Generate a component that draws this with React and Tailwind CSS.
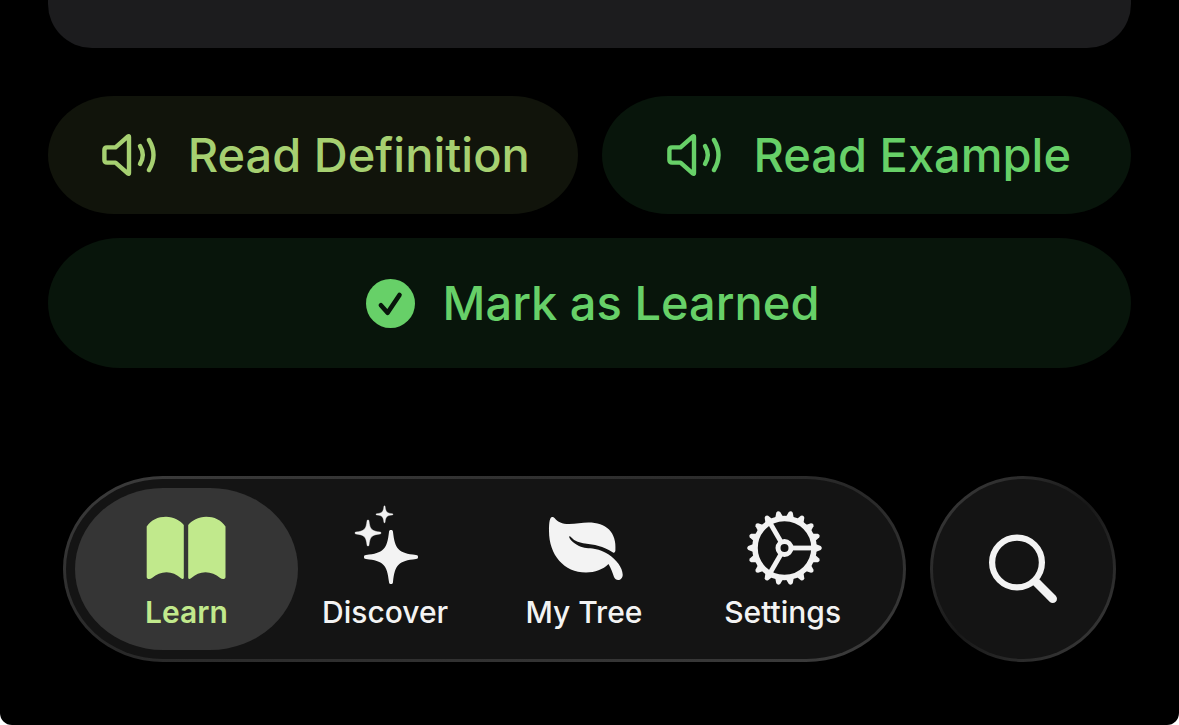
import React, { useState } from "react";

const STAR =
  "M0-27C1.5-27 1.8-26.5 2-25C4-7.5 7.5-4 25-2C26.5-1.8 27-1.5 27 0C27 1.5 26.5 1.8 25 2C7.5 4 4 7.5 2 25C1.8 26.5 1.5 27 0 27C-1.5 27-1.8 26.5-2 25C-4 7.5-7.5 4-25 2C-26.5 1.8-27 1.5-27 0C-27-1.5-26.5-1.8-25-2C-7.5-4-4-7.5-2-25C-1.8-26.5-1.5-27 0-27Z";

const SpeakerIcon = () => (
  <svg
    viewBox="0 0 56 48"
    className="w-14 h-12 shrink-0"
    fill="none"
    stroke="currentColor"
    strokeWidth="4.4"
    strokeLinecap="round"
    strokeLinejoin="round"
    aria-hidden="true"
  >
    <path d="M5 16.4H13.5L26 5.4Q27 4.6 27 6V42Q27 43.4 26 42.6L13.5 31.6H5Q2.4 31.6 2.4 29V19Q2.4 16.4 5 16.4Z" />
    <path d="M38 15Q43.6 24 38 33" />
    <path d="M47 9Q56 24 47 39" />
  </svg>
);

const CheckIcon = () => (
  <svg viewBox="0 0 49 49" className="w-[49px] h-[49px] shrink-0" aria-hidden="true">
    <circle cx="24.5" cy="24.5" r="24.5" fill="currentColor" />
    <path
      d="M14.9 26.3L21.6 33.8L33.5 15.9"
      fill="none"
      stroke="#08150b"
      strokeWidth="4.6"
      strokeLinecap="round"
      strokeLinejoin="round"
    />
  </svg>
);

const BookIcon = () => (
  <svg viewBox="0 0 80 80" className="size-20" fill="currentColor" aria-hidden="true">
    <path d="M.7 18.6C5 12 12 8.8 20 8.8S34 12.6 37.8 17V69.5C37.8 71.2 36.2 71.4 35 70.3C30.5 66.5 26 64.3 20.5 64.3S10.5 66.5 6 70C4 71.7 .7 71.4 .7 69Z" />
    <path d="M79.5 18.6C75.2 12 68.2 8.8 60.2 8.8S46 12.6 42.2 17V69.5C42.2 71.2 43.8 71.4 45 70.3C49.5 66.5 54 64.3 59.5 64.3S69.7 66.5 74.2 70C76.2 71.7 79.5 71.4 79.5 69Z" />
  </svg>
);

const SparklesIcon = () => (
  <svg viewBox="0 0 80 80" className="size-20 overflow-visible" fill="currentColor" aria-hidden="true">
    <path d={STAR} transform="translate(46 49)" />
    <path d={STAR} transform="translate(23 25) scale(.48)" stroke="currentColor" strokeWidth="1" />
    <path d={STAR} transform="translate(39.5 6.3) scale(.315)" stroke="currentColor" strokeWidth="1" />
  </svg>
);

const LeafIcon = () => (
  <svg viewBox="0 0 80 80" className="size-20" fill="currentColor" aria-hidden="true">
    <path d="M8 9C5 9 5 19 5 23C5 47 20 64.5 42 64.5C51 64.5 59 61.5 64.5 56C67 60 68.5 65 70 69C72 74 79 72.5 78.7 66.5C78.4 60 73 52 64.3 46.3C60 43.5 56 42 51 41C44 39.7 40 40.5 35 38C29 35 25 31 25.2 28.6C25.4 27.5 26.8 28.5 28 30C31 33.5 36 34.8 41 35.5C50 36.5 59 38 69 44.5C70.3 45.3 71.3 44 71.4 42.5C73 24 62 14.4 44.3 14.4C38 14.4 32 16 25 16C18 16 14 14 10.5 10Q9.5 8.8 8 9Z" />
  </svg>
);

const GearIcon = () => (
  <svg viewBox="0 0 80 80" className="size-20" aria-hidden="true">
    <g transform="translate(41.5 40)" fill="none" stroke="currentColor">
      <circle r="29.5" strokeWidth="5.6" />
      <circle r="6.5" strokeWidth="5" />
      {[0, 120, 240].map((angle) => (
        <path key={angle} d="M8 0H28" strokeWidth="4.8" transform={`rotate(${angle})`} />
      ))}
      {Array.from({ length: 18 }, (_, i) => (
        <path
          key={i}
          d="M31-4L36.2-2Q38.4 0 36.2 2L31 4Z"
          fill="currentColor"
          stroke="none"
          transform={`rotate(${i * 20})`}
        />
      ))}
    </g>
  </svg>
);

const SearchIcon = () => (
  <svg
    viewBox="0 0 80 80"
    className="size-20"
    fill="none"
    stroke="currentColor"
    strokeLinecap="round"
    aria-hidden="true"
  >
    <circle cx="34" cy="33.5" r="24.9" strokeWidth="6.2" />
    <path d="M53.5 53.5L69.7 69.7" strokeWidth="8.6" />
  </svg>
);

const tabs = [
  { name: "Learn", Icon: BookIcon },
  { name: "Discover", Icon: SparklesIcon },
  { name: "My Tree", Icon: LeafIcon },
  { name: "Settings", Icon: GearIcon },
];

const App = () => {
  const [activeTab, setActiveTab] = useState("Learn");

  return (
    <div className="bg-white">
      <div className="bg-black rounded-b-xl pb-[63px] font-['Inter',sans-serif] font-medium">
        <main className="px-12">
          <div className="h-12 bg-[#1c1c1e] rounded-b-[44px]" />
          <div className="grid grid-cols-2 gap-6 mt-12 text-[47px] leading-[58px]">
            <button
              type="button"
              className="flex items-center justify-center gap-[30px] pl-1.5 py-[30px] rounded-[66px/59px] bg-[#11140b] text-[#a6d071] whitespace-nowrap"
            >
              <SpeakerIcon />
              Read Definition
            </button>
            <button
              type="button"
              className="flex items-center justify-center gap-[30px] pl-1.5 py-[30px] rounded-[66px/59px] bg-[#08150b] text-[#67d068] whitespace-nowrap"
            >
              <SpeakerIcon />
              Read Example
            </button>
            <button
              type="button"
              className="col-span-2 flex items-center justify-center gap-7 pl-1.5 py-9 rounded-[72px/65px] bg-[#08150b] text-[#67d068] whitespace-nowrap"
            >
              <CheckIcon />
              Mark as Learned
            </button>
          </div>
        </main>

        <div className="flex gap-6 mt-[108px] px-[63px]">
          <div className="flex-1 p-[3px] rounded-[100px/93px] bg-linear-to-br from-[#3c3c3c] via-[#282828] to-[#3c3c3c]">
            <nav className="grid grid-cols-4 px-[21px] py-[9px] rounded-[97px/90px] bg-[#141414]">
              {tabs.map(({ name, Icon }) => (
                <button
                  key={name}
                  type="button"
                  onClick={() => setActiveTab(name)}
                  className={`flex flex-col items-center -mx-3 pt-5 pb-[18px] rounded-[88px/81px] ${
                    activeTab === name ? "bg-[#353535] text-[#c1e98c] font-semibold" : "text-[#f3f3f3]"
                  }`}
                >
                  <Icon />
                  <span className="mt-1 text-[30px] leading-10 whitespace-nowrap">{name}</span>
                </button>
              ))}
            </nav>
          </div>
          <div className="size-[186px] p-[3px] rounded-full bg-linear-to-br from-[#404040] via-[#181818] to-[#404040]">
            <button
              type="button"
              aria-label="Search"
              className="flex items-center justify-center size-full rounded-full bg-[#141414] text-[#f3f3f3]"
            >
              <SearchIcon />
            </button>
          </div>
        </div>
      </div>
    </div>
  );
};

export default App;
